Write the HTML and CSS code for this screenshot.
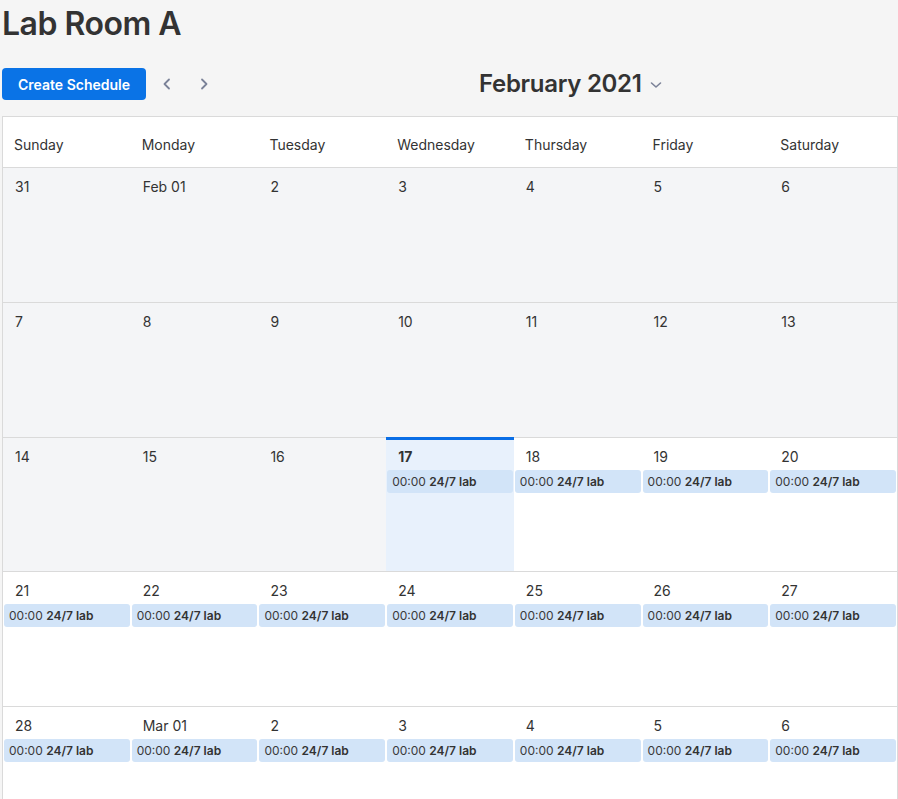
FILE: index.html
```html
<!DOCTYPE html>
<html lang="en">
<head>
<meta charset="utf-8">
<title>Lab Room A</title>
<link rel="stylesheet" href="styles.css">
</head>
<body>
<div class="page">
  <h1 class="title">Lab Room A</h1>
  <div class="toolbar">
    <button class="btn-primary">Create Schedule</button>
    <button class="nav-btn nav-prev" aria-label="Previous">
      <svg width="16" height="16" viewBox="0 0 16 16"><path d="M10 3.5 L5.5 8 L10 12.5" fill="none" stroke="#7b8298" stroke-width="1.8" stroke-linecap="round" stroke-linejoin="round"/></svg>
    </button>
    <button class="nav-btn" aria-label="Next">
      <svg width="16" height="16" viewBox="0 0 16 16"><path d="M6 3.5 L10.5 8 L6 12.5" fill="none" stroke="#7b8298" stroke-width="1.8" stroke-linecap="round" stroke-linejoin="round"/></svg>
    </button>
    <div class="month">
      <span class="month-label">February 2021</span>
      <svg class="caret" width="14" height="14" viewBox="0 0 14 14"><path d="M2.5 5 L7 9 L11.5 5" fill="none" stroke="#7b8298" stroke-width="1.6" stroke-linecap="round" stroke-linejoin="round"/></svg>
    </div>
  </div>

  <div class="calendar">
    <div class="week head">
      <div class="dow">Sunday</div><div class="dow">Monday</div><div class="dow">Tuesday</div><div class="dow">Wednesday</div><div class="dow">Thursday</div><div class="dow">Friday</div><div class="dow">Saturday</div>
    </div>

    <div class="week">
      <div class="cell past"><div class="date">31</div></div>
      <div class="cell past"><div class="date">Feb 01</div></div>
      <div class="cell past"><div class="date">2</div></div>
      <div class="cell past"><div class="date">3</div></div>
      <div class="cell past"><div class="date">4</div></div>
      <div class="cell past"><div class="date">5</div></div>
      <div class="cell past"><div class="date">6</div></div>
    </div>

    <div class="week">
      <div class="cell past"><div class="date">7</div></div>
      <div class="cell past"><div class="date">8</div></div>
      <div class="cell past"><div class="date">9</div></div>
      <div class="cell past"><div class="date">10</div></div>
      <div class="cell past"><div class="date">11</div></div>
      <div class="cell past"><div class="date">12</div></div>
      <div class="cell past"><div class="date">13</div></div>
    </div>

    <div class="week">
      <div class="cell past"><div class="date">14</div></div>
      <div class="cell past"><div class="date">15</div></div>
      <div class="cell past"><div class="date">16</div></div>
      <div class="cell today"><div class="date">17</div><div class="event">00:00 <b>24/7 lab</b></div></div>
      <div class="cell"><div class="date">18</div><div class="event">00:00 <b>24/7 lab</b></div></div>
      <div class="cell"><div class="date">19</div><div class="event">00:00 <b>24/7 lab</b></div></div>
      <div class="cell"><div class="date">20</div><div class="event">00:00 <b>24/7 lab</b></div></div>
    </div>

    <div class="week">
      <div class="cell"><div class="date">21</div><div class="event">00:00 <b>24/7 lab</b></div></div>
      <div class="cell"><div class="date">22</div><div class="event">00:00 <b>24/7 lab</b></div></div>
      <div class="cell"><div class="date">23</div><div class="event">00:00 <b>24/7 lab</b></div></div>
      <div class="cell"><div class="date">24</div><div class="event">00:00 <b>24/7 lab</b></div></div>
      <div class="cell"><div class="date">25</div><div class="event">00:00 <b>24/7 lab</b></div></div>
      <div class="cell"><div class="date">26</div><div class="event">00:00 <b>24/7 lab</b></div></div>
      <div class="cell"><div class="date">27</div><div class="event">00:00 <b>24/7 lab</b></div></div>
    </div>

    <div class="week">
      <div class="cell"><div class="date">28</div><div class="event">00:00 <b>24/7 lab</b></div></div>
      <div class="cell"><div class="date">Mar 01</div><div class="event">00:00 <b>24/7 lab</b></div></div>
      <div class="cell"><div class="date">2</div><div class="event">00:00 <b>24/7 lab</b></div></div>
      <div class="cell"><div class="date">3</div><div class="event">00:00 <b>24/7 lab</b></div></div>
      <div class="cell"><div class="date">4</div><div class="event">00:00 <b>24/7 lab</b></div></div>
      <div class="cell"><div class="date">5</div><div class="event">00:00 <b>24/7 lab</b></div></div>
      <div class="cell"><div class="date">6</div><div class="event">00:00 <b>24/7 lab</b></div></div>
    </div>
  </div>
</div>
</body>
</html>
```

FILE: styles.css
```css
* { box-sizing: border-box; }

html, body {
  margin: 0;
  padding: 0;
  background: #f5f5f5;
}

body {
  font-family: Inter, "Noto Sans", "Liberation Sans", sans-serif;
  color: #333;
}

.page {
  padding-left: 2px;
  width: 898px;
}

.title {
  margin: 0;
  font-size: 32px;
  line-height: 48px;
  font-weight: 600;
  color: #333;
  letter-spacing: -0.5px;
}

.toolbar {
  display: flex;
  align-items: center;
  margin-top: 20px;
  height: 32px;
}

.btn-primary {
  height: 32px;
  width: 144px;
  border: 0;
  border-radius: 4px;
  background: #0a73e6;
  color: #fff;
  font-family: inherit;
  font-size: 14px;
  font-weight: 600;
  padding: 0;
  cursor: pointer;
}

.nav-btn {
  width: 24px;
  height: 24px;
  border: 0;
  background: transparent;
  padding: 0;
  display: flex;
  align-items: center;
  justify-content: center;
  margin-left: 13px;
}

.nav-prev { margin-left: 9px; }

.month {
  display: flex;
  align-items: center;
  margin-left: 263px;
}

.month-label {
  font-size: 24px;
  font-weight: 600;
  color: #333;
  line-height: 32px;
  letter-spacing: -0.3px;
}

.caret {
  margin-left: 7px;
  margin-top: 2px;
}

.calendar {
  margin-top: 16px;
  width: 896px;
  border: 1px solid #dadada;
  background: #fff;
}

.week {
  display: grid;
  grid-template-columns: repeat(7, 1fr);
  height: 134.75px;
  border-top: 1px solid #dadada;
}

.week.head {
  border-top: 0;
  height: 50px;
  align-items: center;
}

.dow {
  padding: 0 11px;
  font-size: 14px;
  color: #333;
  padding-top: 4px;
}

.cell {
  position: relative;
  background: #fff;
}

.cell.past { background: #f4f5f7; }

.cell.today { background: #e8f1fc; }

.cell.today::before {
  content: "";
  position: absolute;
  left: 0;
  right: 0;
  top: -1px;
  height: 3px;
  background: #0a6ee6;
}

.cell.today .date { font-weight: 700; }

.date {
  padding: 9px 12px 0;
  height: 32px;
  font-size: 14px;
  line-height: 20px;
  color: #333;
}

.event {
  margin: 0 1px 0 1px;
  height: 23px;
  line-height: 23px;
  padding: 0 5px;
  background: #d2e4f8;
  border-radius: 3px;
  font-size: 12px;
  color: #3a3a3a;
  white-space: nowrap;
  overflow: hidden;
}

.event b { font-weight: 600; color: #333; }
```
